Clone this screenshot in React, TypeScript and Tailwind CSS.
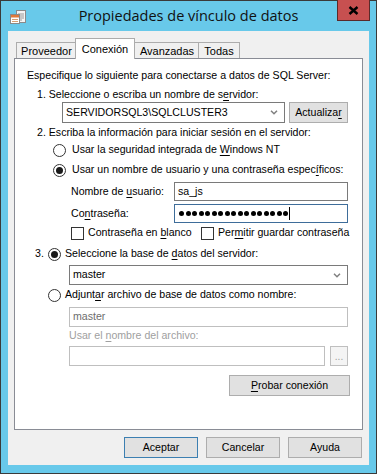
import React from 'react'

const U = ({ children }: { children: React.ReactNode }) => (
    <span className="underline decoration-1 underline-offset-[2px]">{children}</span>
)

const Radio = ({ checked }: { checked?: boolean }) => (
    <div className="w-[13px] h-[13px] rounded-full border border-[#333333] bg-white flex items-center justify-center shrink-0">
        {checked && <div className="w-[7px] h-[7px] rounded-full bg-[#1a1a1a]" />}
    </div>
)

const Check = () => <div className="w-[13px] h-[13px] border border-[#333333] bg-white shrink-0" />

const Chevron = () => (
    <svg width="8" height="5" viewBox="0 0 8 5" className="shrink-0">
        <path d="M1 0.8 L4 3.8 L7 0.8" fill="none" stroke="#808080" strokeWidth="1.5" />
    </svg>
)

const Btn = ({ children, w, def }: { children: React.ReactNode; w: string; def?: boolean }) => (
    <div
        className={`${w} h-[21px] flex items-center justify-center bg-[#e1e1e1] border ${
            def ? 'border-[#3c7fb1]' : 'border-[#adadad]'
        }`}
    >
        {children}
    </div>
)

const AppIcon = () => (
    <svg width="17" height="15" viewBox="0 0 17 15">
        <rect x="6.5" y="0.5" width="9" height="12" fill="#f4f4f4" stroke="#8a8a8a" />
        <path d="M8 4h6M8 6h6M8 8h6M8 10h4" stroke="#9a9a9a" />
        <rect x="0.5" y="4.5" width="9" height="9" fill="#ffffff" stroke="#8a8a8a" />
        <rect x="1" y="5" width="8" height="2.5" fill="#e07a3a" />
        <path d="M2 9.5h6M2 11.5h6" stroke="#d9a070" />
    </svg>
)

export default function App() {
    return (
        <div className="w-[377px] h-[474px] border border-[#3a3a3a] bg-[#68c9ea] flex flex-col text-[10.6px] text-black font-['Liberation_Sans',Arial,sans-serif] select-none">
            {/* title bar */}
            <div className="h-[30px] flex items-start relative">
                <div className="mt-[9px] ml-[9px]">
                    <AppIcon />
                </div>
                <div className="flex-1 text-center mt-[4px] pl-[13px] text-[14.5px] font-['Open_Sans',sans-serif] text-[#111]">
                    Propiedades de vínculo de datos
                </div>
                <div className="w-[33px] h-[21px] mt-[-1px] mr-[6px] bg-[#c75050] border border-[#5a2a2a] border-t-0 flex items-center justify-center">
                    <svg width="11" height="9" viewBox="0 0 11 9">
                        <path d="M1.5 1 L9.5 8 M9.5 1 L1.5 8" stroke="#000" strokeWidth="2.4" />
                    </svg>
                </div>
            </div>

            {/* client */}
            <div className="flex-1 mx-[7px] mb-[8px] bg-[#f0f0f0] pt-[7px] pl-[6px] pr-[7px] flex flex-col">
                {/* tabs */}
                <div className="h-[20px] flex items-end pl-[2px] text-[11px]">
                    <div className="w-[61px] h-[16px] border border-b-0 border-[#acacac] bg-[#f0f0f0] flex items-center justify-center pt-[1px]">
                        Proveedor
                    </div>
                    <div className="relative z-10 w-[60px] h-[21px] -mb-[1px] -ml-[2px] border border-b-0 border-[#acacac] bg-white flex items-start justify-center pt-[2px]">
                        Conexión
                    </div>
                    <div className="w-[66px] h-[16px] -ml-[2px] border border-b-0 border-[#acacac] bg-[#f0f0f0] flex items-center justify-center pt-[1px] pl-[2px]">
                        Avanzadas
                    </div>
                    <div className="w-[42px] h-[16px] -ml-[1px] border border-b-0 border-[#acacac] bg-[#f0f0f0] flex items-center justify-center pt-[1px]">
                        Todas
                    </div>
                </div>

                {/* panel */}
                <div className="w-[349px] h-[372px] border border-[#898c95] bg-white flex flex-col">
                    <div className="h-[16px] mt-[9px] ml-[12px] flex items-center">
                        Especifique lo siguiente para conectarse a datos de SQL Server:
                    </div>
                    <div className="h-[14px] mt-[4px] ml-[22px] flex items-center">
                        1. Seleccione o escriba un nombre de s<U>e</U>rvidor:
                    </div>
                    <div className="h-[21px] ml-[47px] flex gap-[4px]">
                        <div className="w-[223px] h-[21px] border border-[#7a7a7a] bg-white flex items-center pl-[3px] pr-[6px]">
                            <span className="flex-1">SERVIDORSQL3\SQLCLUSTER3</span>
                            <Chevron />
                        </div>
                        <Btn w="w-[59px]">
                            Actualiza<U>r</U>
                        </Btn>
                    </div>
                    <div className="h-[16px] mt-[2px] ml-[22px] flex items-center">
                        2. Escriba la información para iniciar sesión en el servidor:
                    </div>
                    <div className="h-[16px] mt-[1px] ml-[38px] flex items-center gap-[6px]">
                        <Radio />
                        <span>
                            Usar la seguridad integrada de <U>W</U>indows NT
                        </span>
                    </div>
                    <div className="h-[16px] mt-[4px] ml-[38px] flex items-center gap-[6px]">
                        <Radio checked />
                        <span>
                            Usar un nombre de usuario y una contraseña espec<U>í</U>ficos:
                        </span>
                    </div>
                    <div className="h-[19px] mt-[4px] ml-[56px] flex items-center">
                        <span className="w-[103px]">
                            Nombre de <U>u</U>suario:
                        </span>
                        <div className="w-[174px] h-[19px] border border-[#7a7a7a] bg-white flex items-center pl-[3px]">
                            sa_js
                        </div>
                    </div>
                    <div className="h-[19px] mt-[3px] ml-[56px] flex items-center">
                        <span className="w-[103px]">
                            Co<U>n</U>traseña:
                        </span>
                        <div className="w-[174px] h-[19px] border border-[#3e6d9a] bg-white flex items-center pl-[4px]">
                            <div className="flex gap-[1.5px]">
                                {Array.from({ length: 17 }).map((_, i) => (
                                    <div key={i} className="w-[5px] h-[5px] rounded-full bg-black" />
                                ))}
                            </div>
                            <div className="w-[1px] h-[13px] bg-black ml-[1px]" />
                        </div>
                    </div>
                    <div className="h-[14px] mt-[3px] ml-[56px] flex items-center">
                        <Check />
                        <span className="ml-[4px] w-[113px]">
                            Contraseña en <U>b</U>lanco
                        </span>
                        <Check />
                        <span className="ml-[4px]">
                            Per<U>m</U>itir guardar contraseña
                        </span>
                    </div>
                    <div className="h-[16px] mt-[6px] ml-[20px] flex items-center">
                        <span className="w-[13px]">3.</span>
                        <Radio checked />
                        <span className="ml-[4px]">
                            Seleccione la base de <U>d</U>atos del servidor:
                        </span>
                    </div>
                    <div className="w-[279px] h-[20px] mt-[3px] ml-[54px] border border-[#7a7a7a] bg-white flex items-center pl-[3px] pr-[6px]">
                        <span className="flex-1">master</span>
                        <Chevron />
                    </div>
                    <div className="h-[16px] mt-[2px] ml-[33px] flex items-center">
                        <Radio />
                        <span className="ml-[4px]">
                            Adjunt<U>a</U>r archivo de base de datos como nombre:
                        </span>
                    </div>
                    <div className="w-[279px] h-[20px] mt-[4px] ml-[54px] border border-[#bfbfbf] bg-white flex items-center pl-[3px] text-[#6d6d6d]">
                        master
                    </div>
                    <div className="h-[14px] mt-[2px] ml-[54px] flex items-center text-[#a0a0a0]">
                        <span>
                            Usar el <U>n</U>ombre del archivo:
                        </span>
                    </div>
                    <div className="h-[20px] mt-[3px] ml-[54px] flex gap-[5px]">
                        <div className="w-[256px] h-[20px] border border-[#bfbfbf] bg-white" />
                        <div className="w-[18px] h-[20px] border border-[#bfbfbf] bg-[#f4f4f4] flex items-center justify-center text-[#a0a0a0] text-[10px]">
                            ...
                        </div>
                    </div>
                    <div className="mt-[9px] flex justify-end pr-[12px]">
                        <Btn w="w-[121px]">
                            <U>P</U>robar conexión
                        </Btn>
                    </div>
                </div>

                {/* bottom buttons */}
                <div className="mt-[7px] flex justify-end gap-[8px]">
                    <Btn w="w-[74px]" def>
                        Aceptar
                    </Btn>
                    <Btn w="w-[74px]">Cancelar</Btn>
                    <Btn w="w-[74px]">Ayuda</Btn>
                </div>
            </div>
        </div>
    )
}
